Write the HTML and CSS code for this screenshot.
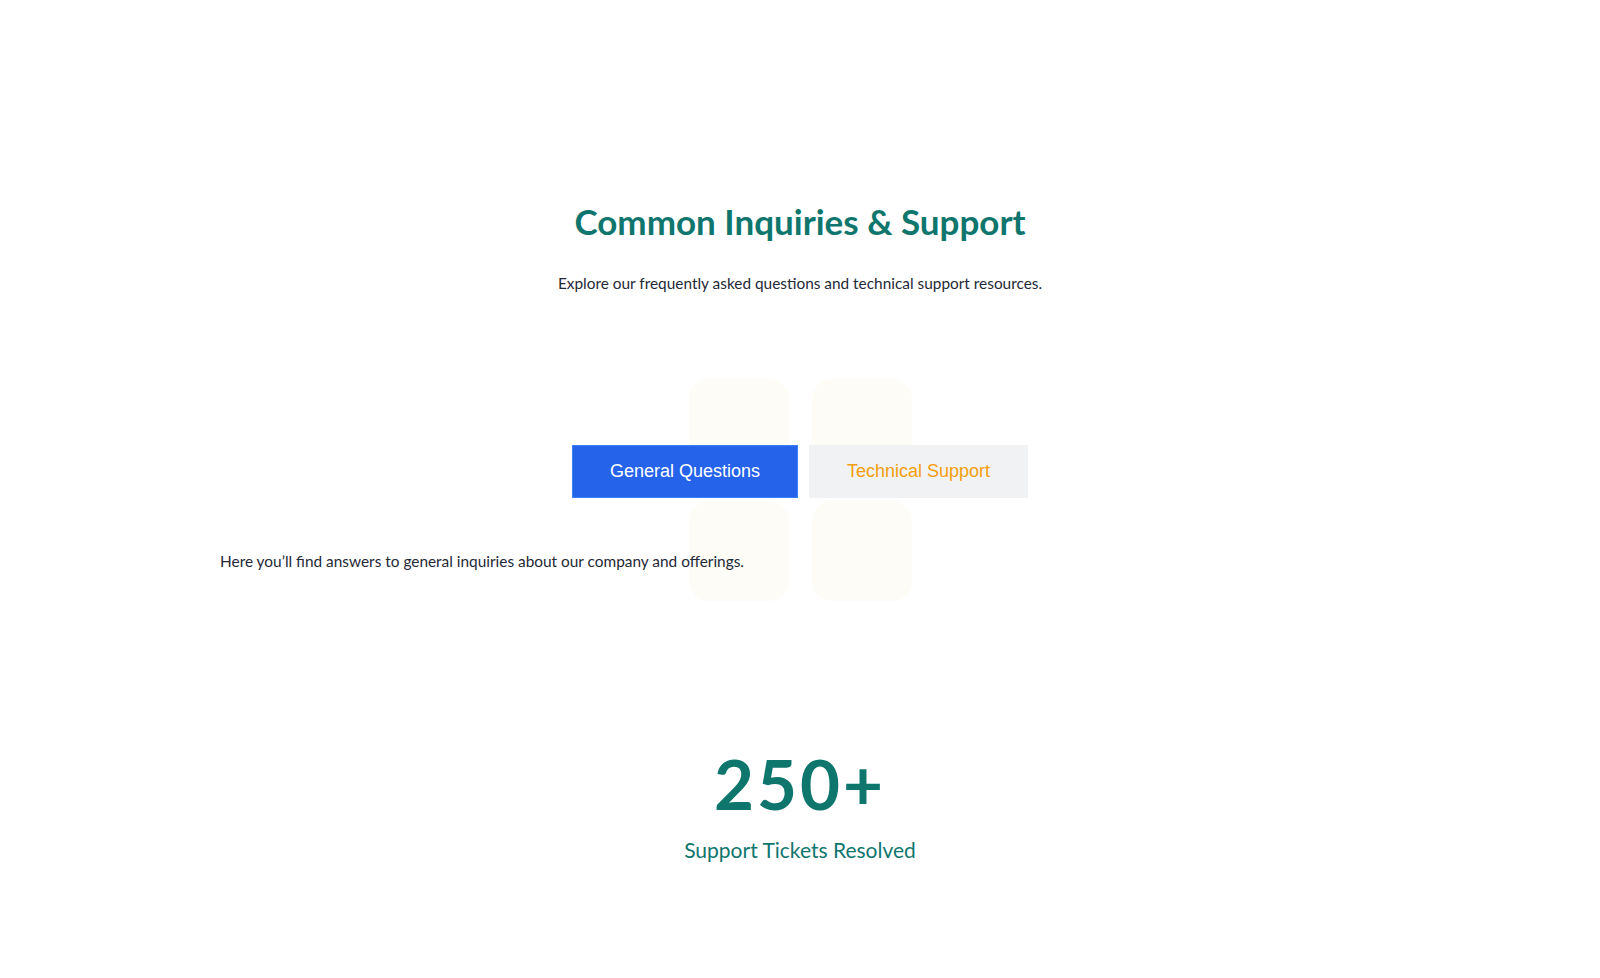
FILE: index.html
```html
<!DOCTYPE html>
<html lang="en">
<head>
  <meta charset="UTF-8">
  <meta name="viewport" content="width=device-width, initial-scale=1.0">
  <title>Common Inquiries &amp; Support</title>
  <link rel="stylesheet" href="styles.css">
</head>
<body>
  <section class="faq">
    <div class="container">
      <h2 class="faq-title">Common Inquiries &amp; Support</h2>
      <p class="faq-lead">Explore our frequently asked questions and technical support resources.</p>

      <div class="tabs-area">
        <div class="deco">
          <span></span><span></span><span></span><span></span>
        </div>
        <div class="tabs">
          <button class="tab active">General Questions</button>
          <button class="tab">Technical Support</button>
        </div>
      </div>

      <div class="tab-panel">
        <p>Here you’ll find answers to general inquiries about our company and offerings.</p>
      </div>
    </div>
  </section>

  <section class="stats">
    <div class="stat">
      <div class="stat-number">250+</div>
      <div class="stat-label">Support Tickets Resolved</div>
    </div>
  </section>
</body>
</html>
```

FILE: styles.css
```css
body {
  margin: 0;
  font-family: Lato, "Open Sans", sans-serif;
  color: #1f2937;
  background-color: #fff;
}
.container {
  max-width: 1160px;
  margin: 0 auto;
}
.faq {
  padding-top: 197px;
}
.faq-title {
  margin: 0;
  text-align: center;
  font-size: 35px;
  font-weight: 700;
  line-height: 48px;
  color: #0f766e;
}
.faq-lead {
  margin: 27px 0 0;
  text-align: center;
  font-size: 15.4px;
  line-height: 22px;
}
.tabs-area {
  position: relative;
  margin-top: 85px;
  padding-top: 66px;
}
.deco {
  position: absolute;
  top: 0;
  left: 50%;
  margin-left: -111px;
  display: grid;
  grid-template-columns: repeat(2, 100px);
  gap: 22px 23px;
  z-index: -1;
}
.deco span {
  display: block;
  height: 100px;
  border-radius: 20px;
  background-color: #fdfcf6;
}
.tabs {
  display: flex;
  justify-content: center;
  gap: 11px;
}
.tab {
  height: 53px;
  padding: 0 38px;
  border: 0;
  font-family: Arial, "Liberation Sans", sans-serif;
  font-size: 18px;
  color: #f59e0b;
  background-color: #f1f2f4;
  cursor: pointer;
}
.tab.active {
  padding: 0 37px;
  color: #fff;
  background-color: #2563eb;
  border: 1px solid #3b82f6;
}
.tab-panel p {
  margin: 52px 0 0;
  font-size: 15.4px;
  line-height: 22px;
}
.stats {
  padding-top: 172px;
  text-align: center;
}
.stat-number {
  font-size: 69px;
  font-weight: 700;
  line-height: 80px;
  letter-spacing: 3px;
  color: #0f766e;
}
.stat-label {
  margin-top: 11px;
  font-size: 21px;
  line-height: 30px;
  color: #0f766e;
}
```
